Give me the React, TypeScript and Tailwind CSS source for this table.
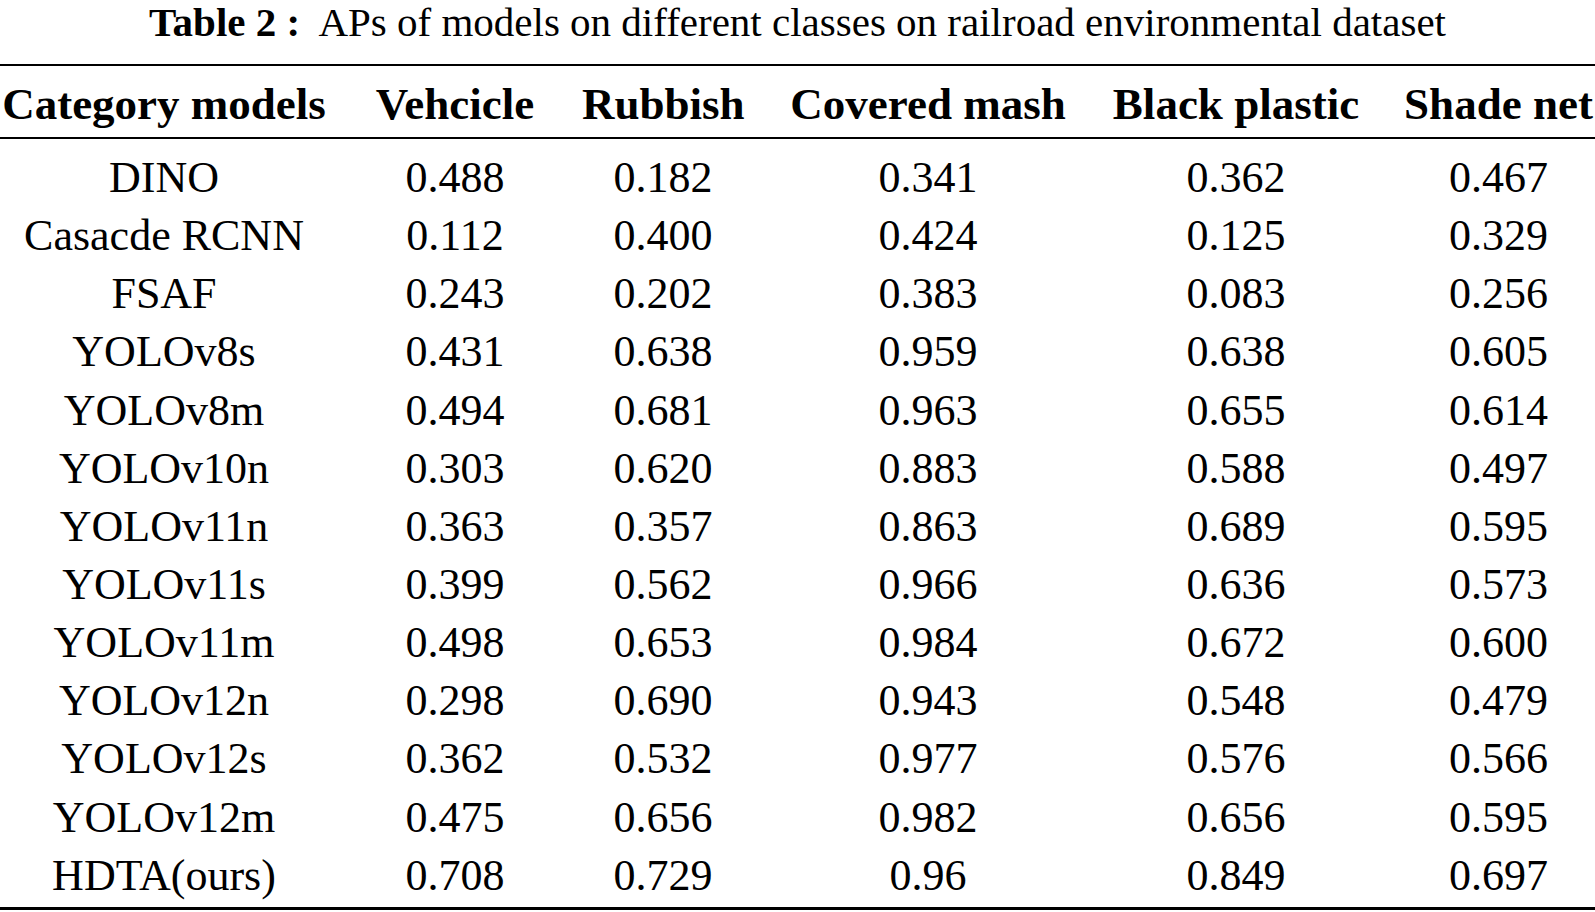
import React from "react";

const headers = ["Category models", "Vehcicle", "Rubbish", "Covered mash", "Black plastic", "Shade net"];

const rows: string[][] = [
  ["DINO", "0.488", "0.182", "0.341", "0.362", "0.467"],
  ["Casacde RCNN", "0.112", "0.400", "0.424", "0.125", "0.329"],
  ["FSAF", "0.243", "0.202", "0.383", "0.083", "0.256"],
  ["YOLOv8s", "0.431", "0.638", "0.959", "0.638", "0.605"],
  ["YOLOv8m", "0.494", "0.681", "0.963", "0.655", "0.614"],
  ["YOLOv10n", "0.303", "0.620", "0.883", "0.588", "0.497"],
  ["YOLOv11n", "0.363", "0.357", "0.863", "0.689", "0.595"],
  ["YOLOv11s", "0.399", "0.562", "0.966", "0.636", "0.573"],
  ["YOLOv11m", "0.498", "0.653", "0.984", "0.672", "0.600"],
  ["YOLOv12n", "0.298", "0.690", "0.943", "0.548", "0.479"],
  ["YOLOv12s", "0.362", "0.532", "0.977", "0.576", "0.566"],
  ["YOLOv12m", "0.475", "0.656", "0.982", "0.656", "0.595"],
  ["HDTA(ours)", "0.708", "0.729", "0.96", "0.849", "0.697"],
];

const cellCls = [
  "text-center whitespace-nowrap",
  "text-center whitespace-nowrap",
  "text-center whitespace-nowrap",
  "text-center whitespace-nowrap",
  "text-center whitespace-nowrap",
  "text-center whitespace-nowrap pl-[42px]",
];

export default function App() {
  return (
    <div
      className="w-[1595px] min-h-[912px] bg-white text-black"
      style={{ fontFamily: '"Liberation Serif", "Times New Roman", serif' }}
    >
      <div className="h-[64px] flex justify-center">
        <div className="text-[41px] leading-[45px] whitespace-nowrap">
          <span className="font-bold">Table 2 :</span>
          <span>&nbsp; APs of models on different classes on railroad environmental dataset</span>
        </div>
      </div>

      <div className="grid grid-cols-[328px_254px_162px_368px_248px_235px] items-center h-[75px] pt-[6px] border-t-2 border-b-2 border-black text-[45px] leading-[45px] font-bold">
        {headers.map((h, i) => (
          <div key={h} className={cellCls[i]}>
            {h}
          </div>
        ))}
      </div>

      <div className="pt-[10px] pb-[2px] border-b-[3px] border-black">
        {rows.map((r) => (
          <div
            key={r[0]}
            className="grid grid-cols-[328px_254px_162px_368px_248px_235px] items-center h-[58.15px] text-[44px] leading-[44px]"
          >
            {r.map((c, i) => (
              <div key={i} className={cellCls[i]}>
                {c}
              </div>
            ))}
          </div>
        ))}
      </div>
    </div>
  );
}
